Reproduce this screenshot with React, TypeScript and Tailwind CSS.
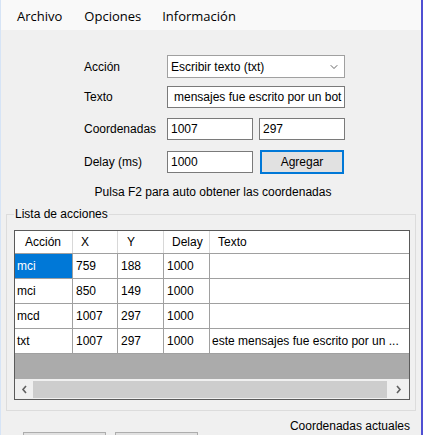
import { ChevronDown } from "lucide-react"

const rows = [
  { a: "mci", x: "759", y: "188", d: "1000", t: "" },
  { a: "mci", x: "850", y: "149", d: "1000", t: "" },
  { a: "mcd", x: "1007", y: "297", d: "1000", t: "" },
  { a: "txt", x: "1007", y: "297", d: "1000", t: "este mensajes fue escrito por un ..." },
]

function Field({ value, className = "" }: { value: string; className?: string }) {
  return (
    <div className={`h-[22px] border border-[#7a7a7a] bg-white pl-[3px] flex items-center overflow-hidden whitespace-nowrap ${className}`}>
      {value}
    </div>
  )
}

export default function App() {
  return (
    <div
      className="w-[423px] h-[435px] overflow-hidden bg-[#f0f0f0] border-l border-l-[#d6e4f6] border-r-2 border-r-[#4f4fd2] text-[12px] text-black flex flex-col"
      style={{ fontFamily: '"Liberation Sans", Arial, sans-serif' }}
    >
      {/* menu */}
      <div className="h-[30px] shrink-0 bg-[#f9f9f9] flex items-center pl-[16px] pt-[3px] text-[13px]" style={{ fontFamily: '"Open Sans", sans-serif' }}>
        <span>Archivo</span>
        <span className="ml-[22px]">Opciones</span>
        <span className="ml-[21px]">Información</span>
      </div>

      {/* form */}
      <div className="pl-[83px] flex flex-col">
        <div className="mt-[25px] flex items-center h-[23px]">
          <span className="w-[83px]">Acción</span>
          <div className="w-[178px] h-[23px] border border-[#a0a0a0] bg-white flex items-center justify-between pl-[3px] pr-[4px]">
            <span>Escribir texto (txt)</span>
            <ChevronDown className="w-[12px] h-[12px] text-[#333]" strokeWidth={1.5} />
          </div>
        </div>
        <div className="mt-[8px] flex items-center">
          <span className="w-[83px]">Texto</span>
          <Field value="mensajes fue escrito por un bot" className="w-[178px] pl-[6px]" />
        </div>
        <div className="mt-[10px] flex items-center">
          <span className="w-[83px]">Coordenadas</span>
          <Field value="1007" className="w-[86px]" />
          <Field value="297" className="w-[86px] ml-[6px]" />
        </div>
        <div className="mt-[10px] flex items-center h-[24px]">
          <span className="w-[83px]">Delay (ms)</span>
          <Field value="1000" className="w-[86px]" />
          <button className="ml-[7px] w-[84px] h-[24px] bg-[#e1e1e1] border border-[#0078d7] shadow-[inset_0_0_0_1px_#0078d7]">Agregar</button>
        </div>
      </div>

      <div className="mt-[11px] text-center pl-[4px] leading-[14px]">Pulsa F2 para auto obtener las coordenadas</div>

      {/* group box */}
      <fieldset className="mt-[8px] ml-[5px] w-[410px] border border-[#dcdcdc] pb-[10px]">
        <legend className="ml-[7px] px-[1px] leading-[14px]">Lista de acciones</legend>
        <div className="mt-[9px] ml-[7px] w-[396px] border border-[#5a5a5a] bg-white flex flex-col">
          <div className="flex h-[23px] border-b border-[#a0a0a0]">
            <div className="w-[58px] border-r border-[#d8d8d8] pl-[10px] flex items-center">Acción</div>
            <div className="w-[45px] border-r border-[#d8d8d8] pl-[8px] flex items-center">X</div>
            <div className="w-[46px] border-r border-[#d8d8d8] pl-[9px] flex items-center">Y</div>
            <div className="w-[46px] border-r border-[#d8d8d8] pl-[8px] flex items-center">Delay</div>
            <div className="flex-1 pl-[8px] flex items-center">Texto</div>
          </div>
          {rows.map((r, i) => (
            <div key={i} className="flex h-[25px] border-b border-[#a0a0a0]">
              <div className={`w-[58px] border-r border-[#a0a0a0] pl-[2px] flex items-center ${i === 0 ? "bg-[#0078d7] text-white" : ""}`}>{r.a}</div>
              <div className="w-[45px] border-r border-[#a0a0a0] pl-[3px] flex items-center">{r.x}</div>
              <div className="w-[46px] border-r border-[#a0a0a0] pl-[3px] flex items-center">{r.y}</div>
              <div className="w-[46px] border-r border-[#a0a0a0] pl-[3px] flex items-center">{r.d}</div>
              <div className="flex-1 pl-[2px] flex items-center whitespace-nowrap overflow-hidden">{r.t}</div>
            </div>
          ))}
          <div className="h-[25px] bg-[#ababab]" />
          <div className="h-[20px] bg-[#f0f0f0] flex items-center">
            <div className="w-[18px] flex justify-center">
              <svg width="7" height="9" viewBox="0 0 7 9"><path d="M5 1 L2 4.5 L5 8" fill="none" stroke="#606060" strokeWidth="1.6" /></svg>
            </div>
            <div className="flex-1 h-[17px] bg-[#cdcdcd]" />
            <div className="w-[22px] flex justify-center">
              <svg width="7" height="9" viewBox="0 0 7 9"><path d="M2 1 L5 4.5 L2 8" fill="none" stroke="#606060" strokeWidth="1.6" /></svg>
            </div>
          </div>
        </div>
      </fieldset>

      {/* bottom */}
      <div className="flex shrink-0">
        <div className="flex gap-[9px] pl-[22px] pt-[21px]">
          <div className="w-[83px] h-[24px] border border-[#adadad] bg-[#e1e1e1]" />
          <div className="w-[83px] h-[24px] border border-[#adadad] bg-[#e1e1e1]" />
        </div>
        <div className="ml-auto pr-[11px] pt-[8px] leading-[14px]">Coordenadas actuales</div>
      </div>
    </div>
  )
}
